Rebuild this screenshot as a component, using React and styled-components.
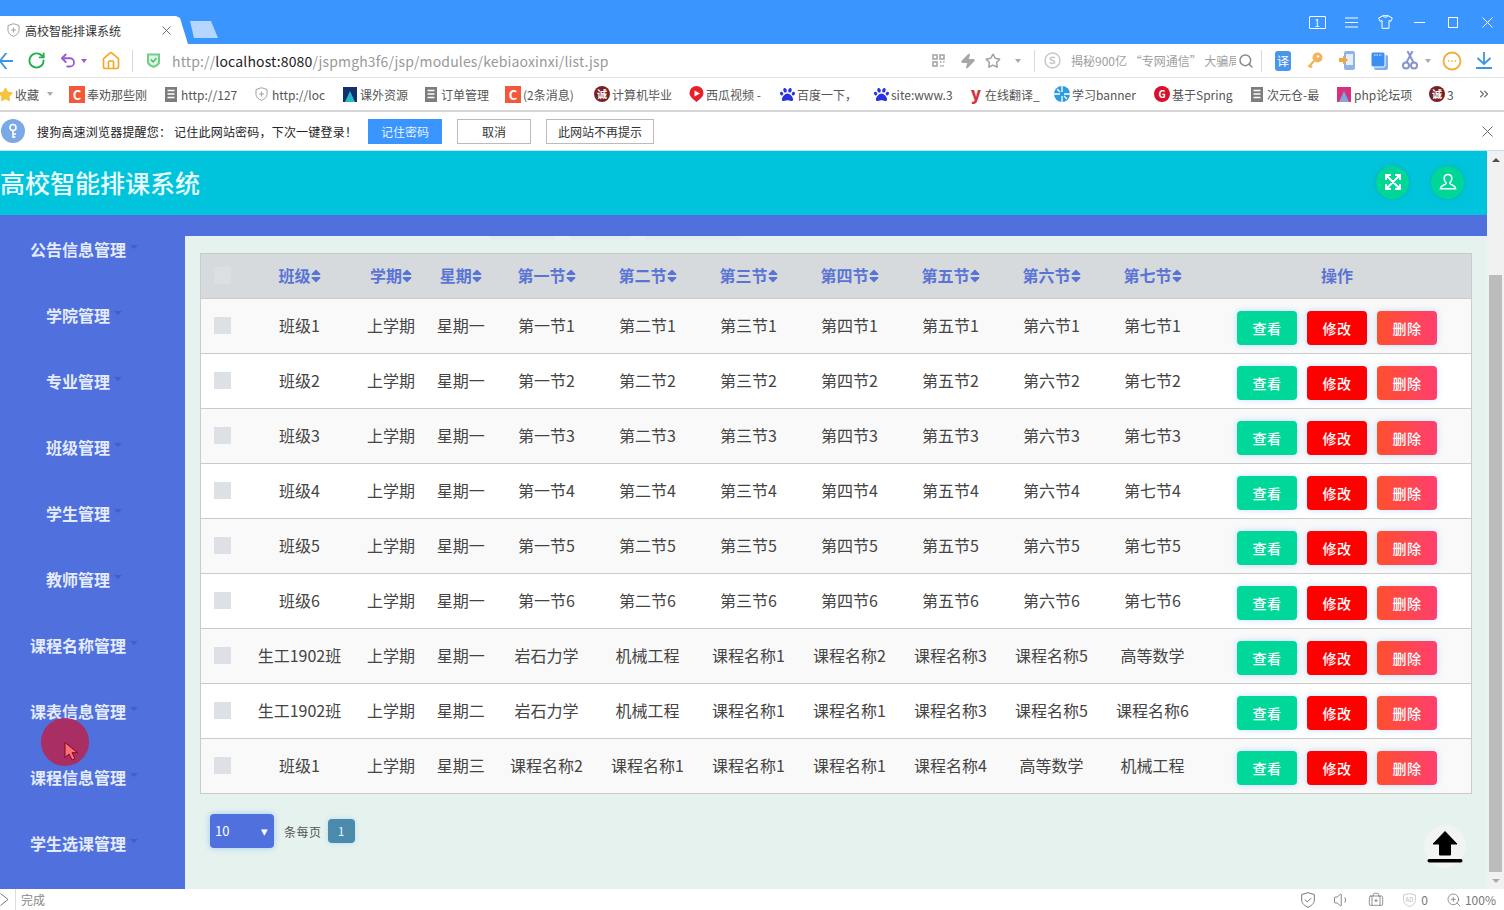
import React from 'react';
import styled, { createGlobalStyle } from 'styled-components';
import { FaSort, FaPaw, FaStar } from 'react-icons/fa';
import { RotateCw, Undo2, Home, Zap, Star, Search, Volume1, BriefcaseMedical, ZoomIn, ChevronsRight } from 'lucide-react';

const GlobalStyle = createGlobalStyle`
  html, body {
    margin: 0;
    padding: 0;
    overflow: hidden;
    background: #fff;
  }
  * { box-sizing: border-box; }
  body {
    font-family: "Noto Sans CJK SC", "Liberation Sans", sans-serif;
  }
`;

const Screen = styled.div`
  position: relative;
  width: 1504px;
  height: 910px;
  display: flex;
  flex-direction: column;
  overflow: hidden;
`;

/* browser chrome */
const TitleBar = styled.div`
  height: 44px;
  background: #3a95ff;
  display: flex;
  align-items: flex-end;
  flex: none;
`;

const Tab = styled.div`
  width: 188px;
  height: 28px;
  background: #fff;
  clip-path: polygon(0 0, 176px 0, 180px 2px, 188px 28px, 0 28px);
  display: flex;
  align-items: center;
  padding-left: 7px;
  font-size: 12px;
  color: #333;
`;

const TabTitle = styled.span`
  margin-left: 5px;
  width: 137px;
  white-space: nowrap;
`;

const NewTab = styled.div`
  width: 28px;
  height: 17px;
  margin: 0 0 6px 2px;
  background: #b5d6ff;
  clip-path: polygon(0 0, 21px 0, 28px 17px, 4px 17px);
`;

const WindowControls = styled.div`
  margin-left: auto;
  height: 44px;
  display: flex;
  align-items: center;
`;

const ControlCell = styled.div`
  width: 34px;
  display: flex;
  justify-content: center;
  color: #fff;
`;

const CountBox = styled.div`
  width: 17px;
  height: 13px;
  border: 1px solid #fff;
  border-radius: 1px;
  font-size: 10px;
  line-height: 11px;
  text-align: center;
  color: #fff;
`;

const Toolbar = styled.div`
  height: 34px;
  flex: none;
  background: #fff;
  border-bottom: 1px solid #e4e4e4;
  display: flex;
  align-items: center;
`;

const NavGroup = styled.div`
  display: flex;
  align-items: center;
  width: 146px;
  flex: none;
`;

const NavIcon = styled.div`
  width: ${(p) => p.$w}px;
  flex: none;
  display: flex;
  justify-content: ${(p) => p.$align || 'center'};
  align-items: center;
`;

const Divider = styled.div`
  width: 1px;
  height: 22px;
  background: #d8d8d8;
  flex: none;
`;

const Url = styled.div`
  flex: 1;
  margin-left: 11px;
  font-size: 14px;
  letter-spacing: 0.15px;
  color: #999;
  white-space: nowrap;
  b {
    font-weight: 400;
    color: #222;
  }
`;

const Caret = styled.span`
  width: 0;
  height: 0;
  border-left: 3.5px solid transparent;
  border-right: 3.5px solid transparent;
  border-top: 4px solid ${(p) => p.$color || '#aaa'};
  display: inline-block;
`;

const SearchHint = styled.div`
  width: 165px;
  font-size: 12px;
  color: #a0a0a0;
  overflow: hidden;
  white-space: nowrap;
  margin-left: 1px;
  padding-right: 5px;
  flex: none;
`;

const TranslateBadge = styled.span`
  width: 16px;
  height: 20px;
  border-radius: 3px;
  background: #4b95ea;
  color: #fff;
  font-size: 12px;
  line-height: 20px;
  text-align: center;
`;

const BookmarkBar = styled.div`
  height: 34px;
  flex: none;
  background: #fff;
  border-bottom: 2px solid #d6d6d6;
  display: flex;
  align-items: center;
`;

const Bookmark = styled.div`
  width: ${(p) => p.$w}px;
  flex: none;
  display: flex;
  align-items: center;
  font-size: 12px;
  color: #555;
  white-space: nowrap;
  gap: ${(p) => p.$gap || 2}px;
`;

const FavSquare = styled.span`
  width: 16px;
  height: 17px;
  background: ${(p) => p.$bg};
  color: #fff;
  font-size: 13px;
  line-height: 17px;
  text-align: center;
  flex: none;
  font-weight: 700;
`;

const FavRound = styled.span`
  width: 16px;
  height: 16px;
  border-radius: 50%;
  background: ${(p) => p.$bg};
  color: #fff;
  font-size: 10px;
  line-height: 16px;
  text-align: center;
  flex: none;
  font-weight: 700;
`;

const FavLetter = styled.span`
  width: 14px;
  margin-left: 6px;
  color: #d9303a;
  font-size: 17px;
  line-height: 17px;
  padding-bottom: 3px;
  font-weight: 900;
  flex: none;
  text-align: center;
`;

const NoticeBar = styled.div`
  height: 39px;
  flex: none;
  background: #fff;
  border-bottom: 1px solid #bfe6ec;
  display: flex;
  align-items: center;
  font-size: 12px;
  color: #222;
  padding-left: 1px;
`;

const KeyBadge = styled.div`
  width: 24px;
  height: 24px;
  border-radius: 50%;
  background: #7aa9e8;
  display: flex;
  align-items: center;
  justify-content: center;
  margin-right: 12px;
  flex: none;
`;

const NoticeText = styled.span`
  width: 331px;
  white-space: nowrap;
  letter-spacing: 0.2px;
`;

const NoticeButton = styled.button`
  width: ${(p) => p.$w}px;
  height: 25px;
  margin-right: 15px;
  padding: 0;
  font: inherit;
  border: 1px solid ${(p) => (p.$primary ? '#3a95ff' : '#bbb')};
  background: ${(p) => (p.$primary ? '#3a95ff' : '#fff')};
  color: ${(p) => (p.$primary ? '#e8f2ff' : '#333')};
`;

const NoticeClose = styled.div`
  margin-left: auto;
  margin-right: 11px;
  color: #666;
  display: flex;
`;

/* page inside the browser */
const Viewport = styled.div`
  flex: 1;
  min-height: 0;
  display: flex;
`;

const Page = styled.div`
  flex: 1;
  min-width: 0;
  display: flex;
  flex-direction: column;
`;

const Header = styled.header`
  height: 64px;
  flex: none;
  background: #00c4dc;
  display: flex;
  align-items: center;
  padding: 0 23px 2px 0;
`;

const Brand = styled.div`
  font-size: 25px;
  font-weight: 500;
  color: #e9fbfd;
  margin-right: auto;
  white-space: nowrap;
`;

const RoundAction = styled.div`
  width: 33px;
  height: 33px;
  border-radius: 50%;
  background: #00d796;
  box-shadow: 0 0 5px rgba(0, 160, 140, 0.5);
  margin-left: 22px;
  display: flex;
  align-items: center;
  justify-content: center;
  color: #fff;
`;

const Body = styled.div`
  flex: 1;
  min-height: 0;
  display: flex;
`;

const Sidebar = styled.nav`
  width: 185px;
  flex: none;
  background: #4f70dd;
  padding: 1px 17px 0 0;
`;

const MenuItem = styled.div`
  height: 66px;
  display: flex;
  align-items: center;
  justify-content: center;
  gap: 4px;
  font-size: 16px;
  font-weight: 700;
  color: #e4ebfb;
`;

const MenuCaret = styled(Caret)`
  margin-top: -4px;
  border-left-width: 4px;
  border-right-width: 4px;
`;

const Main = styled.main`
  flex: 1;
  min-width: 0;
  display: flex;
  flex-direction: column;
  background: #e6f2ee;
`;

const Band = styled.div`
  height: 21px;
  flex: none;
  background: #4f70dd;
`;

const BandShadows = styled.div`
  height: 17px;
  flex: none;
  display: flex;
  align-items: flex-start;
  padding-left: 305px;
  gap: 15px;
`;

const BandShadow = styled.div`
  width: ${(p) => p.$w}px;
  height: 3px;
  background: rgba(80, 112, 221, 0.06);
  border-radius: 0 0 8px 8px;
  filter: blur(1px);
`;

const Content = styled.div`
  padding: 0 15px;
`;

const Table = styled.table`
  width: 1272px;
  table-layout: fixed;
  border-collapse: collapse;
  border: 1px solid #c9cccc;
  font-size: 16px;
`;

const Th = styled.th`
  width: ${(p) => p.$w}px;
  height: 45px;
  padding: 0 0 2px;
  background: #d6dadd;
  color: #5a74d6;
  font-weight: 700;
  border-bottom: 1px solid #c9cccc;
  white-space: nowrap;
  svg {
    vertical-align: -2px;
    margin: 0 -3px;
  }
`;

const Tr = styled.tr`
  background: ${(p) => (p.$odd ? '#f9f9f9' : '#fff')};
`;

const Td = styled.td`
  height: 55px;
  padding: 0 0 2px;
  text-align: center;
  color: #444;
  border-bottom: 1px solid #c9cccc;
  white-space: nowrap;
`;

const Check = styled.span`
  display: block;
  width: 17px;
  height: 17px;
  margin-left: 13px;
  background: ${(p) => (p.$head ? '#dcdfe2' : '#dde0e4')};
`;

const Actions = styled.div`
  display: flex;
  justify-content: center;
  gap: 10px;
  padding-top: 6px;
`;

const ActionButton = styled.button`
  width: 60px;
  height: 34px;
  padding: 0;
  border: 0;
  border-radius: 4px;
  font-family: inherit;
  font-size: 14px;
  font-weight: 500;
  letter-spacing: 0.5px;
  color: #fff;
  background: ${(p) => p.$bg};
  box-shadow: 0 0 6px rgba(64, 158, 255, 0.3);
`;

const Pager = styled.div`
  display: flex;
  align-items: center;
  margin: 20px 0 0 10px;
  font-size: 12px;
  color: #555;
`;

const PageSize = styled.div`
  width: 64px;
  height: 34px;
  background: #4f70dd;
  border-radius: 4px;
  box-shadow: 0 0 6px rgba(64, 158, 255, 0.45);
  color: #fff;
  font-size: 13px;
  display: flex;
  align-items: center;
  justify-content: space-between;
  padding: 0 6px 2px 5px;
  margin-right: 10px;
`;

const PageLabel = styled.span`
  margin-right: 6px;
  letter-spacing: 0.5px;
`;

const PageNumber = styled.div`
  width: 27px;
  height: 24px;
  border-radius: 4px;
  background: #4a8aab;
  box-shadow: 0 0 5px rgba(64, 158, 255, 0.3);
  color: #e8f3f8;
  text-align: center;
  line-height: 24px;
  font-size: 12px;
`;

const BackTop = styled.div`
  position: absolute;
  left: 1424px;
  top: 825px;
  width: 42px;
  height: 43px;
  border-radius: 50%;
  background: #f1f4f3;
  display: flex;
  align-items: center;
  justify-content: center;
`;

const Scrollbar = styled.div`
  width: 17px;
  flex: none;
  background: #f1f1f1;
  display: flex;
  flex-direction: column;
  align-items: center;
`;

const ScrollArrow = styled.div`
  height: 17px;
  flex: none;
  display: flex;
  align-items: center;
  justify-content: center;
`;

const ArrowUp = styled.span`
  width: 0;
  height: 0;
  border-left: 4px solid transparent;
  border-right: 4px solid transparent;
  border-bottom: 4px solid #505050;
`;

const ArrowDown = styled(Caret)`
  border-left-width: 4px;
  border-right-width: 4px;
`;

const ScrollGap = styled.div`
  height: 107px;
  flex: none;
`;

const ScrollThumb = styled.div`
  width: 13px;
  flex: 1;
  background: #bcbcbc;
`;

const CursorHalo = styled.div`
  position: absolute;
  left: 41px;
  top: 718px;
  width: 48px;
  height: 48px;
  border-radius: 50%;
  background: rgba(176, 40, 88, 0.92);
  display: flex;
  padding: 23px 0 0 23px;
`;

const StatusBar = styled.div`
  height: 21px;
  flex: none;
  background: #fff;
  display: flex;
  align-items: center;
  font-size: 12px;
  color: #888;
`;

const StatusToggle = styled.div`
  width: 16px;
  height: 21px;
  border-right: 1px solid #ddd;
  display: flex;
  align-items: center;
  flex: none;
`;

const StatusText = styled.span`
  margin-left: 5px;
  margin-right: auto;
`;

const StatusCell = styled.div`
  width: ${(p) => p.$w}px;
  flex: none;
  display: flex;
  align-items: center;
  justify-content: ${(p) => p.$align || 'center'};
  gap: ${(p) => p.$gap || 0}px;
  color: #777;
  white-space: nowrap;
`;

/* drawings */
const BackArrow = () => (
  <svg width="13" height="16" viewBox="0 0 13 16" fill="none" stroke="#3a95e8" strokeWidth="1.8">
    <path d="M13 8H0M7-1 0 8l7 9" />
  </svg>
);

const ShieldMark = () => (
  <svg width="15" height="17" viewBox="0 0 15 17">
    <path d="M1 1.5h13v9c0 2.5-3.5 4.5-6.500 5.500C4.500 15 1 13 1 10.500z" fill="#6fcf8a" />
    <path d="M3 3.500h9v6.500c0 1.500-2.500 3-4.500 3.800C5.500 13 3 11.500 3 10z" fill="#dff5e5" />
    <path d="M4.800 7.500l2.300 2.300 3.300-3.600" fill="none" stroke="#4dbb6e" strokeWidth="1.500" />
  </svg>
);

const GlobeShield = ({ size = 13 }) => (
  <svg width={size} height={size + 1} viewBox="0 0 13 14" fill="none" stroke="#a0a0a0">
    <path d="M6.500.7 12 2.500v5c0 3-3 5-5.500 5.800C4 12.500 1 10.500 1 7.500v-5z" />
    <path d="M6.500 4.500v5M4 7h5" />
  </svg>
);

const DocIcon = () => (
  <svg width="12" height="15" viewBox="0 0 12 15">
    <rect width="12" height="15" fill="#7d7d7d" />
    <path d="M2.500 3.500h7M2.500 7h7M2.500 10.500h7" stroke="#fff" strokeWidth="1.300" />
  </svg>
);

const ImageFav = ({ from, to }) => (
  <svg width="14" height="15" viewBox="0 0 14 15">
    <rect width="14" height="15" fill={from} />
    <path d="M2 15 7 4l5 11z" fill={to} />
  </svg>
);

const PlayFav = () => (
  <svg width="15" height="16" viewBox="0 0 15 16">
    <path d="M7.500 0a7 7 0 0 1 7 7c0 4-4 6-7 9-3-3-7-5-7-9a7 7 0 0 1 7-7z" fill="#e8202a" />
    <path d="M5.500 4.500 11 7.500l-5.500 3z" fill="#fff" />
  </svg>
);

const ShutterFav = () => (
  <svg width="16" height="16" viewBox="0 0 16 16">
    <circle cx="8" cy="8" r="8" fill="#2d9be0" />
    <path d="M8 0v6M16 8h-6M8 16v-6M0 8h6M3 3l3 3M13 13l-3-3" stroke="#fff" strokeWidth="1.300" />
  </svg>
);

const QrIcon = () => (
  <svg width="13" height="13" viewBox="0 0 13 13" fill="none" stroke="#a6a6a6" strokeWidth="1.600">
    <rect x="1" y="1" width="4" height="4" />
    <rect x="8" y="1" width="4" height="4" />
    <rect x="1" y="8" width="4" height="4" />
    <path d="M8 8h1.500M11 8h1.500M8 12h1.500M11 11v1.500" />
  </svg>
);

const SogouS = () => (
  <svg width="17" height="17" viewBox="0 0 17 17" fill="none">
    <circle cx="8.500" cy="8.500" r="7.500" stroke="#c8c8c8" strokeWidth="1.500" />
    <path d="M11 6c-.7-1-3.800-1.300-4.800.2-1 2 4.800 2 4.600 4-.3 1.700-4 1.800-5.300.4" stroke="#c8c8c8" strokeWidth="1.500" />
  </svg>
);

const KeyIcon = () => (
  <svg width="16" height="17" viewBox="0 0 16 17">
    <circle cx="10.500" cy="5.500" r="5" fill="#f3b35b" />
    <path d="M7 9 1.500 15M3 13.500l2 2" stroke="#f3b35b" strokeWidth="2.400" />
    <circle cx="11" cy="4.500" r="1.200" fill="#fff" />
  </svg>
);

const PhoneIcon = () => (
  <svg width="17" height="19" viewBox="0 0 17 19">
    <rect x="5" y="0" width="11" height="19" rx="2" fill="#8fb4e4" />
    <rect x="7" y="3" width="7" height="11" fill="#e4eefb" />
    <path d="M0 7h4V4.500L9 9l-5 4.500V11H0z" fill="#f3a53f" />
  </svg>
);

const WindowsIcon = () => (
  <svg width="17" height="18" viewBox="0 0 17 18">
    <rect x="3" y="3" width="14" height="15" rx="2" fill="#7faee8" />
    <rect x="0" y="0" width="14" height="15" rx="2" fill="#3a8ff0" stroke="#fff" />
    <path d="M3 3h8" stroke="#fff" strokeDasharray="1.500 1" />
  </svg>
);

const ScissorsIcon = () => (
  <svg width="16" height="19" viewBox="0 0 16 19" fill="none" stroke="#8a93c8" strokeWidth="2">
    <circle cx="4" cy="14.500" r="3" />
    <circle cx="12" cy="14.500" r="3" />
    <path d="M4.500 11.500 10.500 0M11.500 11.500 5.500 0" />
  </svg>
);

const DotsIcon = () => (
  <svg width="20" height="20" viewBox="0 0 20 20" fill="none">
    <circle cx="10" cy="10" r="8.500" stroke="#f5ac3c" strokeWidth="1.800" />
    <path d="M6 10h1.500M9.300 10h1.500M12.600 10h1.500" stroke="#f5ac3c" strokeWidth="1.500" />
  </svg>
);

const DownloadIcon = () => (
  <svg width="16" height="17" viewBox="0 0 16 17" fill="none" stroke="#3a95e8" strokeWidth="1.800">
    <path d="M8 0v12M1.500 6 8 12l6.500-6M0 16h16" />
  </svg>
);

const ShirtIcon = () => (
  <svg width="15" height="14" viewBox="0 0 15 14" fill="none" stroke="#fff">
    <path d="M5 .7h5L14.300 3l-1.300 3.300-2-.8v7.800H4V5.500l-2 .8L.7 3zM5 .7c.3 2 4.700 2 5 0" />
  </svg>
);

const MenuLines = () => (
  <svg width="13" height="11" viewBox="0 0 13 11" stroke="#fff">
    <path d="M0 1h13M0 5.500h13M0 10h13" />
  </svg>
);

const MinusLine = () => (
  <svg width="11" height="3" viewBox="0 0 11 3" stroke="#fff">
    <path d="M0 1.500h11" />
  </svg>
);

const SquareLine = () => (
  <svg width="10" height="11" viewBox="0 0 10 11" fill="none" stroke="#fff">
    <rect x=".5" y=".5" width="9" height="10" />
  </svg>
);

const CrossLine = ({ size = 11, color = '#fff' }) => (
  <svg width={size} height={size} viewBox="0 0 11 11" stroke={color} fill="none">
    <path d="M.5.5l10 10M10.500.5l-10 10" />
  </svg>
);

const KeyGlyph = () => (
  <svg width="10" height="16" viewBox="0 0 10 16" fill="none" stroke="#fff" strokeWidth="1.600">
    <circle cx="5" cy="4.500" r="3" />
    <path d="M5 7.500V15M5 11h3M5 14h2.500" />
  </svg>
);

const FullscreenMark = () => (
  <svg width="18" height="18" viewBox="0 0 18 18" fill="none" stroke="#fff" strokeWidth="2">
    <path d="M2 2l14 14M16 2 2 16M2 7V2h5M11 2h5v5M16 11v5h-5M7 16H2v-5" />
  </svg>
);

const UserBust = () => (
  <svg width="18" height="18" viewBox="0 0 18 18" fill="none" stroke="#fff" strokeWidth="1.600">
    <path d="M9 1.500c2.500 0 3.800 1.800 3.800 4 0 2-1 3.600-2 4.400 0 1 .7 1.500 2.500 2.200 1.700.7 2.900 1.500 3.300 3.700H1.400c.4-2.200 1.600-3 3.300-3.700 1.800-.7 2.500-1.200 2.500-2.200-1-.8-2-2.400-2-4.400 0-2.200 1.300-4 3.800-4z" />
  </svg>
);

const UploadArrow = () => (
  <svg width="36" height="32" viewBox="0 0 36 32">
    <path d="M18 .5 30 13H23.500V24H12.500V13H6z" fill="#000" stroke="#000" strokeLinejoin="round" />
    <rect x="0.500" y="28" width="35" height="3.500" rx="1.700" fill="#000" />
  </svg>
);

const Pointer = () => (
  <svg width="15" height="21" viewBox="0 0 15 20">
    <path d="M1 1v15l4-3.500 3 6 3-1.500-3-5.800h5.500z" fill="#ff6f78" stroke="#7a0a1e" strokeWidth="1" />
  </svg>
);

const StatusShield = () => (
  <svg width="14" height="16" viewBox="0 0 14 16" fill="none" stroke="#777">
    <path d="M7 .7 13.300 2.500v6c0 3-3.300 5.500-6.300 6.800C4 14 .7 11.500.7 8.500v-6z" />
    <path d="M4 7.500 6.300 10l4-4" />
  </svg>
);

const AdShield = () => (
  <svg width="13" height="14" viewBox="0 0 13 14" fill="none" stroke="#ccc">
    <path d="M6.500.6 12.400 2v5.500c0 3-3 5-5.900 6C3.600 12.500.6 10.500.6 7.500V2z" />
    <text x="6.500" y="9" fontSize="6" textAnchor="middle" fill="#bbb" stroke="none">AD</text>
  </svg>
);

const StatusArrow = () => (
  <svg width="9" height="13" viewBox="0 0 9 13" fill="none" stroke="#777">
    <path d="M.5.500 8 6.500.5 12.500" />
  </svg>
);

/* data */
const bookmarks = [
  { w: 96, icon: <FavSquare $bg="#f4583a">C</FavSquare>, label: '奉劝那些刚' },
  { w: 90, gap: 4, icon: <DocIcon />, label: 'http://127' },
  { w: 88, gap: 4, icon: <GlobeShield />, label: 'http://loc' },
  { w: 82, gap: 3, icon: <ImageFav from="#12306b" to="#2bb6c8" />, label: '课外资源' },
  { w: 80, gap: 4, icon: <DocIcon />, label: '订单管理' },
  { w: 89, icon: <FavSquare $bg="#f4583a">C</FavSquare>, label: '(2条消息)' },
  { w: 95, icon: <FavRound $bg="#7b2025">诚</FavRound>, label: '计算机毕业' },
  { w: 91, icon: <PlayFav />, label: '西瓜视频 -' },
  { w: 94, icon: <FaPaw size={15} color="#2932e1" />, label: '百度一下，' },
  { w: 89, icon: <FaPaw size={15} color="#2932e1" />, label: 'site:www.3' },
  { w: 91, icon: <FavLetter>y</FavLetter>, label: '在线翻译_' },
  { w: 100, icon: <ShutterFav />, label: '学习banner' },
  { w: 97, icon: <FavRound $bg="#d5112c">G</FavRound>, label: '基于Spring' },
  { w: 86, gap: 4, icon: <DocIcon />, label: '次元仓-最' },
  { w: 92, gap: 3, icon: <ImageFav from="#d6317a" to="#7ea6dc" />, label: 'php论坛项' },
  { w: 48, icon: <FavRound $bg="#7b2025">诚</FavRound>, label: '3' },
];

const menus = ['公告信息管理', '学院管理', '专业管理', '班级管理', '学生管理', '教师管理', '课程名称管理', '课表信息管理', '课程信息管理', '学生选课管理'];

const columns = [
  { key: 'cls', label: '班级', w: 114 },
  { key: 'term', label: '学期', w: 69 },
  { key: 'day', label: '星期', w: 70.5 },
  { key: 's1', label: '第一节', w: 101 },
  { key: 's2', label: '第二节', w: 101 },
  { key: 's3', label: '第三节', w: 101 },
  { key: 's4', label: '第四节', w: 101 },
  { key: 's5', label: '第五节', w: 101 },
  { key: 's6', label: '第六节', w: 101 },
  { key: 's7', label: '第七节', w: 101 },
];

const plainRow = (n) => [`班级${n}`, '上学期', '星期一', `第一节${n}`, `第二节${n}`, `第三节${n}`, `第四节${n}`, `第五节${n}`, `第六节${n}`, `第七节${n}`];

const rows = [
  plainRow(1),
  plainRow(2),
  plainRow(3),
  plainRow(4),
  plainRow(5),
  plainRow(6),
  ['生工1902班', '上学期', '星期一', '岩石力学', '机械工程', '课程名称1', '课程名称2', '课程名称3', '课程名称5', '高等数学'],
  ['生工1902班', '上学期', '星期二', '岩石力学', '机械工程', '课程名称1', '课程名称1', '课程名称3', '课程名称5', '课程名称6'],
  ['班级1', '上学期', '星期三', '课程名称2', '课程名称1', '课程名称1', '课程名称1', '课程名称4', '高等数学', '机械工程'],
];

const App = () => {
  return (
    <Screen>
      <GlobalStyle />
      <TitleBar>
        <Tab>
          <GlobeShield />
          <TabTitle>高校智能排课系统</TabTitle>
          <CrossLine size={9} color="#555" />
        </Tab>
        <NewTab />
        <WindowControls>
          <ControlCell><CountBox>1</CountBox></ControlCell>
          <ControlCell><MenuLines /></ControlCell>
          <ControlCell><ShirtIcon /></ControlCell>
          <ControlCell><MinusLine /></ControlCell>
          <ControlCell><SquareLine /></ControlCell>
          <ControlCell><CrossLine /></ControlCell>
        </WindowControls>
      </TitleBar>

      <Toolbar>
        <NavGroup>
          <NavIcon $w={13} $align="flex-start"><BackArrow /></NavIcon>
          <NavIcon $w={46}><RotateCw size={19} color="#22b14c" strokeWidth={2.4} /></NavIcon>
          <NavIcon $w={18}><Undo2 size={19} color="#9b59d0" strokeWidth={2.4} /></NavIcon>
          <NavIcon $w={14}><Caret $color="#9b59d0" /></NavIcon>
          <NavIcon $w={39}><Home size={20} color="#f5a623" strokeWidth={2} /></NavIcon>
          <NavIcon $w={2} />
          <Divider />
        </NavGroup>
        <NavIcon $w={15}><ShieldMark /></NavIcon>
        <Url>http://<b>localhost:8080</b>/jspmgh3f6/jsp/modules/kebiaoxinxi/list.jsp</Url>
        <NavIcon $w={40}><QrIcon /></NavIcon>
        <NavIcon $w={20}><Zap size={16} color="#a6a6a6" fill="#a6a6a6" /></NavIcon>
        <NavIcon $w={30}><Star size={16} color="#a0a0a0" strokeWidth={2.2} /></NavIcon>
        <NavIcon $w={20}><Caret /></NavIcon>
        <NavIcon $w={6} />
        <Divider />
        <NavIcon $w={35}><SogouS /></NavIcon>
        <SearchHint>揭秘900亿 “专网通信” 大骗局</SearchHint>
        <NavIcon $w={20}><Search size={16} color="#888" strokeWidth={2.2} /></NavIcon>
        <NavIcon $w={5} />
        <Divider />
        <NavIcon $w={5} />
        <NavIcon $w={32}><TranslateBadge>译</TranslateBadge></NavIcon>
        <NavIcon $w={32}><KeyIcon /></NavIcon>
        <NavIcon $w={32}><PhoneIcon /></NavIcon>
        <NavIcon $w={32}><WindowsIcon /></NavIcon>
        <NavIcon $w={30}><ScissorsIcon /></NavIcon>
        <NavIcon $w={6}><Caret /></NavIcon>
        <NavIcon $w={42}><DotsIcon /></NavIcon>
        <NavIcon $w={22}><DownloadIcon /></NavIcon>
        <NavIcon $w={9} />
      </Toolbar>

      <BookmarkBar>
        <NavIcon $w={15} $align="flex-start"><FaStar size={15} color="#f7c23c" style={{ marginLeft: -2 }} /></NavIcon>
        <Bookmark $w={32}>收藏</Bookmark>
        <NavIcon $w={22} $align="flex-start"><Caret /></NavIcon>
        {bookmarks.map((b, i) => (
          <Bookmark key={i} $w={b.w} $gap={b.gap}>
            {b.icon}
            {b.label}
          </Bookmark>
        ))}
        <ChevronsRight size={14} color="#666" />
      </BookmarkBar>

      <NoticeBar>
        <KeyBadge><KeyGlyph /></KeyBadge>
        <NoticeText>搜狗高速浏览器提醒您： 记住此网站密码，下次一键登录！</NoticeText>
        <NoticeButton $primary $w={74}>记住密码</NoticeButton>
        <NoticeButton $w={74}>取消</NoticeButton>
        <NoticeButton $w={108}>此网站不再提示</NoticeButton>
        <NoticeClose><CrossLine color="#666" /></NoticeClose>
      </NoticeBar>

      <Viewport>
        <Page>
          <Header>
            <Brand>高校智能排课系统</Brand>
            <RoundAction><FullscreenMark /></RoundAction>
            <RoundAction><UserBust /></RoundAction>
          </Header>
          <Body>
            <Sidebar>
              {menus.map((m) => (
                <MenuItem key={m}>
                  {m}
                  <MenuCaret $color="#4260c4" />
                </MenuItem>
              ))}
            </Sidebar>
            <Main>
              <Band />
              <BandShadows>
                <BandShadow $w={65} />
                <BandShadow $w={60} />
                <BandShadow $w={95} />
              </BandShadows>
              <Content>
                <Table>
                  <thead>
                    <tr>
                      <Th $w={42}><Check $head /></Th>
                      {columns.map((c) => (
                        <Th key={c.key} $w={c.w}>{c.label}<FaSort size={16} /></Th>
                      ))}
                      <Th>操作</Th>
                    </tr>
                  </thead>
                  <tbody>
                    {rows.map((row, i) => (
                      <Tr key={i} $odd={i % 2 === 0}>
                        <Td><Check /></Td>
                        {row.map((cell, j) => <Td key={j}>{cell}</Td>)}
                        <Td>
                          <Actions>
                            <ActionButton $bg="#00d89a">查看</ActionButton>
                            <ActionButton $bg="#ff0000">修改</ActionButton>
                            <ActionButton $bg="linear-gradient(90deg, #ff4f2e, #ff3f6e)">删除</ActionButton>
                          </Actions>
                        </Td>
                      </Tr>
                    ))}
                  </tbody>
                </Table>
                <Pager>
                  <PageSize>10<span>▾</span></PageSize>
                  <PageLabel>条每页</PageLabel>
                  <PageNumber>1</PageNumber>
                </Pager>
              </Content>
            </Main>
          </Body>
        </Page>
        <Scrollbar>
          <ScrollArrow><ArrowUp /></ScrollArrow>
          <ScrollGap />
          <ScrollThumb />
          <ScrollArrow><ArrowDown /></ScrollArrow>
        </Scrollbar>
      </Viewport>

      <StatusBar>
        <StatusToggle><StatusArrow /></StatusToggle>
        <StatusText>完成</StatusText>
        <StatusCell $w={34}><StatusShield /></StatusCell>
        <StatusCell $w={34}><Volume1 size={18} color="#777" strokeWidth={1.2} /></StatusCell>
        <StatusCell $w={34}><BriefcaseMedical size={16} color="#777" strokeWidth={1.2} /></StatusCell>
        <StatusCell $w={45} $gap={5}><AdShield />0</StatusCell>
        <StatusCell $w={58} $gap={3} $align="flex-end"><ZoomIn size={16} color="#777" strokeWidth={1.2} />100%</StatusCell>
        <StatusCell $w={8} />
      </StatusBar>

      <CursorHalo><Pointer /></CursorHalo>
      <BackTop><UploadArrow /></BackTop>
    </Screen>
  );
};

export default App;
